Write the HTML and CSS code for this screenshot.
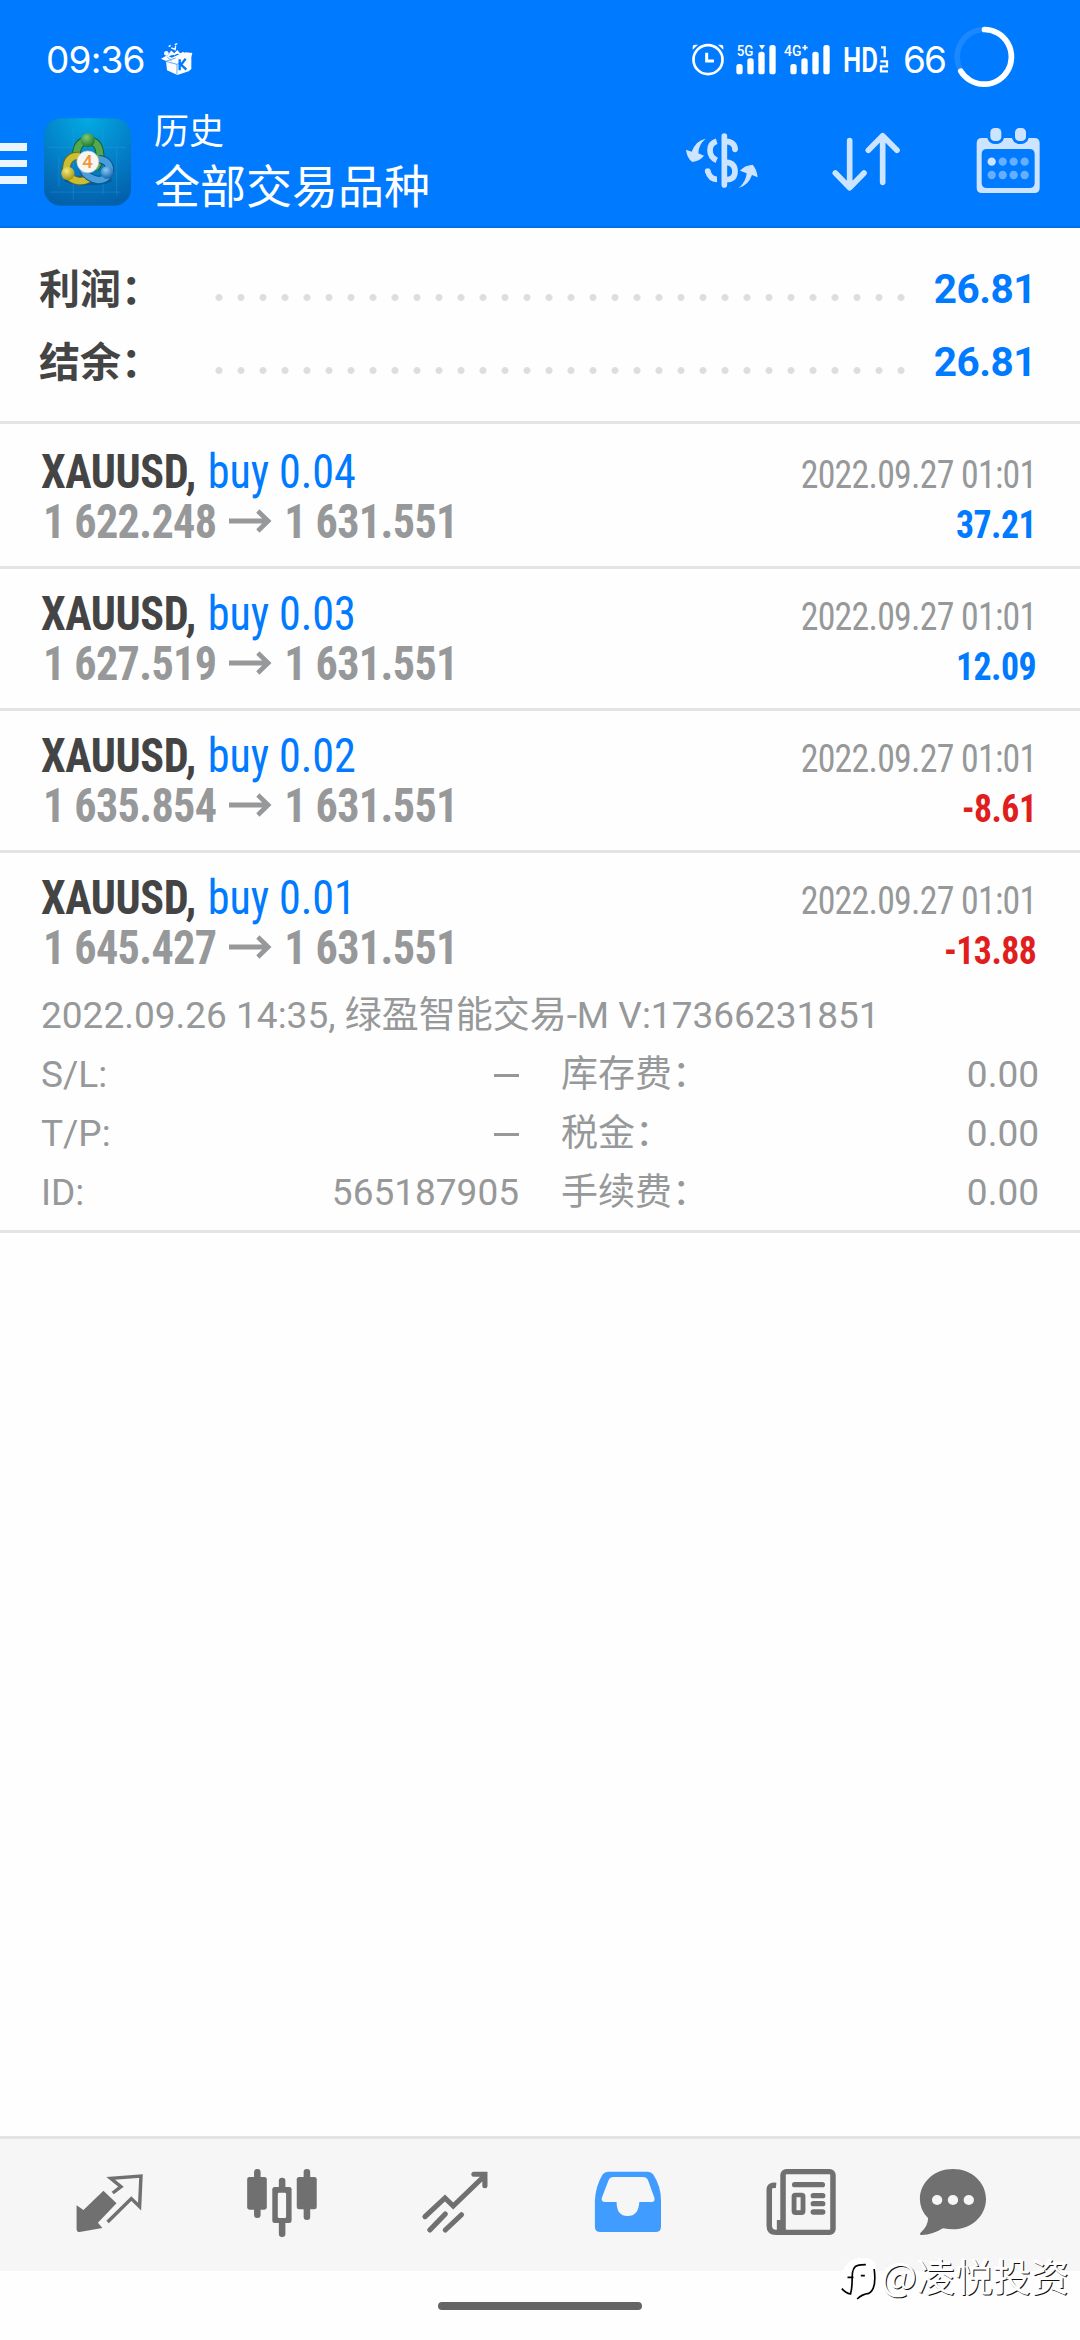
FILE: index.html
```html
<!DOCTYPE html>
<html lang="zh-CN">
<head>
<meta charset="utf-8">
<title>历史</title>
<link rel="stylesheet" href="styles.css">
</head>
<body>
<div class="screen">
  <header class="header">
    <div class="status">
      <span class="clock">09:36</span>
      <svg class="box-icon" viewBox="390 36 102 102">
        <path fill="#fff" d="M393 86l18-10 14 7 20-9 22-7 20 2-3 12v36l-8 7-34 11-31-14-3-28z"/>
        <path d="M407 94l34 9v30M407 94l30-10M411 80l14 14M441 103l12-5" fill="none" stroke="#3d97ff" stroke-width="2.5"/>
        <path d="M449 88v33M467 86l-14 18 16 15" fill="none" stroke="#007aff" stroke-width="7"/>
        <path d="M409 65a5 5 0 1 0 .1 0M416 50l6-4M424 54l12 4M434 44l8-3M437 47l-2 14" fill="#fff" stroke="#fff" stroke-width="4"/>
        <path d="M414 79l10-14 9 8 9-9 9 11 10-8" fill="#fff" stroke="#fff" stroke-width="5"/>
      </svg>
      <div class="status-right">
        <svg class="alarm" viewBox="90 126 102 102" fill="none" stroke="#fff">
          <circle cx="141" cy="179" r="43.500" stroke-width="8"/>
          <path d="M137 158v25h22" stroke-width="9"/>
          <path d="M95 149v-9q0-6 7-6h9zM187 149v-9q0-6-7-6h-9z" fill="#fff" stroke="none"/>
        </svg>
        <svg class="signal one" viewBox="222 126 126 102" fill="#fff">
          <text x="227" y="168" textLength="50" lengthAdjust="spacingAndGlyphs">5G</text>
          <rect x="226" y="192" width="19" height="31" rx="8"/><rect x="259" y="175" width="19" height="48" rx="8"/>
          <rect x="292" y="155" width="19" height="68" rx="8"/><rect x="325" y="135" width="19" height="88" rx="8"/>
          <path d="M294 135h18l-9 14z"/>
        </svg>
        <svg class="signal two" viewBox="366 126 144 102" fill="#fff">
          <text x="369" y="168" textLength="52" lengthAdjust="spacingAndGlyphs">4G</text>
          <path d="M432 135v16M424 143h16" stroke="#fff" stroke-width="5"/>
          <rect x="388" y="192" width="19" height="31" rx="8"/><rect x="421" y="175" width="19" height="48" rx="8"/>
          <rect x="454" y="155" width="19" height="68" rx="8"/><rect x="487" y="135" width="19" height="88" rx="8"/>
        </svg>
        <svg class="hd" viewBox="546 126 138 102" fill="#fff">
          <text class="hd-text" x="546" y="216" textLength="105" lengthAdjust="spacingAndGlyphs">HD</text>
          <path d="M660 142h11v30M658 184h20v15h-18v15h21" fill="none" stroke="#fff" stroke-width="7"/>
        </svg>
        <span class="percent">66</span>
        <svg class="ring" viewBox="876 76 190 190" fill="none" stroke-width="17" stroke-linecap="round">
          <circle cx="971" cy="172" r="82.500" stroke="#1b88ff"/>
          <path d="M971 89.500a82.500 82.500 0 1 1-71.500 126" stroke="#fff"/>
        </svg>
      </div>
    </div>
    <div class="toolbar">
      <div class="menu"><i></i><i></i><i></i></div>
      <svg class="logo" viewBox="43 265 262 263">
        <defs>
          <radialGradient id="bg" cx=".5" cy="0" r="1"><stop offset="0" stop-color="#03abe2"/><stop offset=".55" stop-color="#0380c8"/><stop offset="1" stop-color="#0361ac"/></radialGradient>
          <radialGradient id="gr" cx=".4" cy=".3" r=".7"><stop offset="0" stop-color="#82ca78"/><stop offset="1" stop-color="#187a2c"/></radialGradient>
          <radialGradient id="ye" cx=".4" cy=".3" r=".7"><stop offset="0" stop-color="#f4ec80"/><stop offset="1" stop-color="#a49314"/></radialGradient>
          <radialGradient id="bl" cx=".4" cy=".3" r=".7"><stop offset="0" stop-color="#8cc9f2"/><stop offset="1" stop-color="#1668ae"/></radialGradient>
        </defs>
        <rect x="43" y="265" width="262" height="263" rx="50" fill="url(#bg)"/>
        <path d="M131 295v215M221 295v200M55 352h235M60 487h215M262 350v150M88 380v90" stroke="#36a7df" stroke-opacity=".45" stroke-width="2" fill="none"/>
        <ellipse cx="176" cy="452" rx="72" ry="15" fill="#014d83" opacity=".55"/>
        <path d="M140 376q2-42 36-45 34 3 36 45 0 20-16 40" fill="none" stroke="#145f32" stroke-width="26"/>
        <path d="M140 376q2-42 36-45 34 3 36 45 0 20-16 40" fill="none" stroke="#54a84d" stroke-width="20"/>
        <path d="M150 378q-37-2-40 38 5 36 41 38 16 0 30-8" fill="none" stroke="#716d1a" stroke-width="25"/>
        <path d="M150 378q-37-2-40 38 5 36 41 38 16 0 30-8" fill="none" stroke="#cabe33" stroke-width="19"/>
        <path d="M208 387q33 5 34 36-7 28-36 28-32-5-46-31" fill="none" stroke="#10558f" stroke-width="25"/>
        <path d="M208 387q33 5 34 36-7 28-36 28-32-5-46-31" fill="none" stroke="#4a9fda" stroke-width="19"/>
        <circle cx="175" cy="331" r="21" fill="url(#gr)"/><circle cx="115" cy="431" r="20" fill="url(#ye)"/><circle cx="233" cy="428" r="19" fill="url(#bl)"/>
        <circle cx="175" cy="396" r="33" fill="#f7f6f3" stroke="#c5c3b5" stroke-width="2"/>
        <text class="four" x="158" y="416">4</text>
      </svg>
      <div class="titles"><div class="title-small">历史</div><div class="title-big">全部交易品种</div></div>
      <div class="actions">
        <svg viewBox="72 360 240 240" fill="#cce4ff">
          <path d="M193 408v147" stroke="#cce4ff" stroke-width="17" stroke-linecap="round"/>
          <path d="M170 424q-20 6-20 27t20 30M143 513q7 25 28 25M198 424q27 2 27 24M199 487q26 2 26 27t-26 25" fill="none" stroke="#cce4ff" stroke-width="17"/>
          <circle cx="143" cy="513" r="8.500"/><circle cx="225" cy="448" r="8.500"/>
          <path d="M137 416q-22 18-22 44l17 7q-12 16-35 19-16-11-19-37l17 6q13-34 42-39zM236 564q22-18 24-44l-20-8q13-16 38-18 12 13 15 38l-17-7q-11 31-40 39z"/>
        </svg>
        <svg viewBox="495 360 240 240" fill="none" stroke="#cce4ff" stroke-width="17" stroke-linecap="round" stroke-linejoin="round">
          <path d="M566 422v139M523 519l43 44 43-44M665 547V408M622 451l43-44 43 44"/>
        </svg>
        <svg viewBox="925 360 240 240" fill="#cce4ff">
          <path fill-rule="evenodd" d="M967 414h16q5 18 25 18t25-18h24q5 18 25 18t25-18h17q16 0 16 16v133q0 16-16 16H967q-16 0-16-16V430q0-16 16-16zM982 447q-16 0-16 16v85q0 16 16 16h127q16 0 16-16v-85q0-16-16-16z"/>
          <rect x="992" y="384" width="33" height="39" rx="13"/><rect x="1066" y="384" width="33" height="39" rx="13"/>
          <circle cx="996" cy="485" r="12.500"/>
          <g fill="#66afff"><circle cx="1029" cy="485" r="12.500"/><circle cx="1062" cy="485" r="12.500"/><circle cx="1095" cy="485" r="12.500"/><circle cx="996" cy="525" r="12.500"/><circle cx="1029" cy="525" r="12.500"/><circle cx="1062" cy="525" r="12.500"/><circle cx="1095" cy="525" r="12.500"/></g>
        </svg>
      </div>
    </div>
  </header>

  <section class="summary">
    <div class="sum-row"><span class="sum-label">利润：</span><span class="dots"></span><span class="sum-value">26.81</span></div>
    <div class="sum-row"><span class="sum-label">结余：</span><span class="dots"></span><span class="sum-value">26.81</span></div>
  </section>

  <main class="deals">
    <article class="deal">
      <div class="line"><span class="name"><b>XAUUSD,</b> buy 0.04</span><span class="date">2022.09.27 01:01</span></div>
      <div class="line"><span class="price">1 622.248<svg class="arrow" viewBox="0 0 46 24" preserveAspectRatio="none"><path d="M0 12h42M31 2l11 10-11 10"/></svg>1 631.551</span><span class="profit">37.21</span></div>
    </article>
    <article class="deal">
      <div class="line"><span class="name"><b>XAUUSD,</b> buy 0.03</span><span class="date">2022.09.27 01:01</span></div>
      <div class="line"><span class="price">1 627.519<svg class="arrow" viewBox="0 0 46 24" preserveAspectRatio="none"><path d="M0 12h42M31 2l11 10-11 10"/></svg>1 631.551</span><span class="profit">12.09</span></div>
    </article>
    <article class="deal">
      <div class="line"><span class="name"><b>XAUUSD,</b> buy 0.02</span><span class="date">2022.09.27 01:01</span></div>
      <div class="line"><span class="price">1 635.854<svg class="arrow" viewBox="0 0 46 24" preserveAspectRatio="none"><path d="M0 12h42M31 2l11 10-11 10"/></svg>1 631.551</span><span class="profit loss">-8.61</span></div>
    </article>
    <article class="deal open">
      <div class="line"><span class="name"><b>XAUUSD,</b> buy 0.01</span><span class="date">2022.09.27 01:01</span></div>
      <div class="line"><span class="price">1 645.427<svg class="arrow" viewBox="0 0 46 24" preserveAspectRatio="none"><path d="M0 12h42M31 2l11 10-11 10"/></svg>1 631.551</span><span class="profit loss">-13.88</span></div>
      <div class="details">
        <p class="comment">2022.09.26 14:35, 绿盈智能交易-M V:17366231851</p>
        <div class="pair"><span>S/L:</span><i class="dash"></i></div>
        <div class="pair"><span>库存费：</span><span>0.00</span></div>
        <div class="pair"><span>T/P:</span><i class="dash"></i></div>
        <div class="pair"><span>税金：</span><span>0.00</span></div>
        <div class="pair"><span>ID:</span><span>565187905</span></div>
        <div class="pair"><span>手续费：</span><span>0.00</span></div>
      </div>
    </article>
  </main>

  <nav class="tabs">
    <svg viewBox="197 135 232.300 240" preserveAspectRatio="none">
      <path d="M297 212l38 38-54 58 13 16-66 12q-9 0-9-10v-70l20 14z" fill="#707070"/>
      <path d="M324 219l24-19-30-25 88-7-4 92-24-24-69 70" fill="none" stroke="#707070" stroke-width="10"/>
    </svg>
    <svg viewBox="700 135 232.300 240" preserveAspectRatio="none" fill="#707070">
      <rect x="735" y="147" width="19" height="147" rx="9"/><rect x="715" y="171" width="57" height="98" rx="7"/>
      <rect x="879" y="147" width="19" height="153" rx="9"/><rect x="859" y="171" width="58" height="97" rx="7"/>
      <rect x="807" y="173" width="19" height="178" rx="9"/><rect x="788" y="201" width="56" height="108" rx="7"/><rect x="804" y="218" width="24" height="76" rx="4" fill="#f6f6f6"/>
    </svg>
    <svg viewBox="1202 135 232.300 240" preserveAspectRatio="none" fill="none" stroke="#707070" stroke-width="15" stroke-linecap="round">
      <path d="M1231 290l58-56 24 24 91-91M1373 163h32v34" /><path d="M1245 330l45-48M1290 330l47-46"/>
    </svg>
    <svg viewBox="138 135 232.300 240" preserveAspectRatio="none">
      <path fill="#409cff" fill-rule="evenodd" d="M196 155h116q9 0 15 8 23 35 23 80v77q0 16-16 16H174q-16 0-16-16v-77q2-46 23-80 6-8 15-8zM212 171q-10 0-14 9l-20 54q-2 12 9 12h34q0 42 32 42t34-42h36q10 0 8-12l-19-54q-4-9-14-9z"/>
    </svg>
    <svg viewBox="641 135 232.300 240" preserveAspectRatio="none" fill="none" stroke="#707070" stroke-width="16">
      <rect x="705" y="155" width="145" height="182" rx="10"/>
      <path d="M685 196q-20-2-20 13v108q0 20 20 20h30M695 300v45"/>
      <path d="M739 194h80M793 227h27M793 251h27M793 276h27" stroke-linecap="round"/>
      <rect x="737" y="225" width="26" height="53" rx="4" stroke-width="14"/>
    </svg>
    <svg viewBox="1083 135 232.300 240" preserveAspectRatio="none" fill="#707070">
      <path d="M1199 147c54 0 96 40 96 90s-42 91-96 91q-14 0-29-3-29 19-62 20-8-1-3-7 21-18 22-43-24-24-24-58c0-50 42-90 96-90z"/>
      <g fill="#f6f6f6"><circle cx="1153" cy="240" r="15"/><circle cx="1199" cy="240" r="15"/><circle cx="1245" cy="240" r="15"/></g>
    </svg>
  </nav>
  <div class="home"><i></i></div>
  <div class="watermark">
    <svg viewBox="30 35 110 126">
      <path d="M82 36h28q29 3 29 36v20q-2 40-31 46-15 3-24 20v-22q-20 5-30 2-20-10-21-30l8-2q-12-24 4-46 14-21 37-24z" fill="#fff"/>
      <path d="M52 93h18M66 92q0-31 17-35 7-2 24-2M66 96q0 30-5 47-14-2-26-16M92 88h12M132 68q8 60-16 73-20 2-35 17" fill="none" stroke="#000" stroke-width="5"/>
    </svg>
    <span>@凌悦投资</span>
  </div>
</div>
</body>
</html>
```
FILE: styles.css
```css
* { box-sizing: border-box; }
body { margin: 0; background: #fefefe; font-family: Roboto, "Noto Sans CJK SC", sans-serif; }
.screen { position: relative; width: 1080px; height: 2340px; display: flex; flex-direction: column; overflow: hidden; }
svg { display: block; flex: none; overflow: visible; }

.header { height: 228px; background: #007aff; border-bottom: 2px solid #006ee6; color: #fff; }
.status { height: 118px; display: flex; align-items: flex-start; padding: 22px 63px 0 46px; }
.clock, .percent { font-family: Inter, Roboto, sans-serif; font-size: 37px; line-height: 76px; font-weight: 400; }
.clock { width: 114px; letter-spacing: -0.8px; }
.box-icon { width: 34px; height: 34px; margin-top: 20px; }
.status-right { display: flex; margin-left: auto; }
.alarm { width: 34px; height: 34px; margin: 20px 10px 0 0; }
.signal { height: 34px; margin-top: 20px; }
.signal text { font: 500 43px Roboto, sans-serif; }
.one { width: 42px; margin-right: 6px; }
.two { width: 48px; margin-right: 12px; }
.hd { width: 46px; height: 34px; margin: 20px 14px 0 0; }
.hd-text { font: 600 107px Roboto, sans-serif; }
.percent { width: 50px; letter-spacing: -2px; }
.ring { width: 63px; height: 63px; margin-top: 3px; margin-right: 1px; }

.toolbar { display: flex; height: 108px; align-items: flex-start; padding-right: 32px; }
.menu { width: 27px; margin: 25px 17px 0 0; display: flex; flex-direction: column; gap: 9px; }
.menu i { height: 7.500px; background: #ebf5ff; }
.logo { width: 87px; height: 88px; }
.four { font: 500 56px Roboto, sans-serif; fill: #f3943b; }
.titles { margin: -15px 0 0 23px; white-space: nowrap; font-family: "Noto Sans CJK SC", sans-serif; }
.title-small { font-size: 35px; line-height: 52px; }
.title-big { font-size: 46px; line-height: 56px; }
.actions { display: flex; gap: 62px; margin: 2px 0 0 auto; }
.actions svg { width: 80px; height: 80px; }

.summary { height: 196px; padding: 25px 44px 0 39px; border-bottom: 3px solid #e4e4e4; }
.sum-row { height: 73px; display: flex; align-items: center; line-height: 73px; }
.sum-label { width: 176px; margin-top: -7px; font-family: "Noto Sans CJK SC", sans-serif; font-size: 41px; font-weight: 700; color: #444; }
.dots { width: 693px; height: 7px; margin-top: 15px; background: radial-gradient(circle at 4px 3.500px, #dedede 3px, transparent 4px) 0 0 / 22px 7px; }
.sum-value { margin-left: auto; font-size: 40.500px; font-weight: 700; color: #007aff; letter-spacing: -0.5px; }

.deals { flex: 1; }
.deal { height: 142px; padding: 20px 41px 0; border-bottom: 3px solid #e4e4e4; }
.deal:first-child { height: 145px; padding-top: 23px; }
.deal.open { height: 380px; }
.line { display: flex; justify-content: space-between; align-items: baseline; height: 50px; line-height: 50px; white-space: nowrap; font-family: "Roboto Condensed", Roboto, sans-serif; font-stretch: 75%; padding-right: 3px; }
.name, .price { transform: scaleX(.93); transform-origin: left; }
.date, .profit { transform: scaleX(.93); transform-origin: right; }
.name { font-size: 47.500px; color: #007aff; letter-spacing: -0.1px; }
.name b { color: #444; letter-spacing: -0.5px; margin-right: 2px; }
.price { font-size: 47.500px; font-weight: 700; color: #969899; margin-left: 2px; letter-spacing: -0.7px; }
.arrow { display: inline-block; width: 46px; height: 24px; margin: 0 13px 0 14px; vertical-align: 5px; fill: none; stroke: #969899; stroke-width: 5px; }
.date { font-size: 38.500px; color: #969899; letter-spacing: -0.8px; }
.profit { font-size: 38.500px; font-weight: 700; color: #007aff; letter-spacing: -0.6px; }
.loss { color: #e01e1e; }

.details { display: grid; grid-template-columns: 478px 478px; column-gap: 42px; margin-top: 13px; font-size: 37px; line-height: 59px; color: #969899; }
.comment { grid-column: 1 / 3; margin: 0; white-space: nowrap; }
.pair { display: flex; justify-content: space-between; align-items: center; height: 59px; }
.dash { width: 25px; height: 3px; background: #969899; margin-top: 1px; }

.tabs { height: 135px; background: #f6f6f6; border-top: 3px solid #e4e4e4; display: grid; grid-template-columns: 173px 173px 173px 173px 173px 132px; padding: 26px 0 0 22px; justify-items: center; }
.tabs svg { width: 80px; height: 80px; }
.home { height: 69px; padding-top: 31px; }
.home i { display: block; width: 204px; height: 8px; margin: 0 auto; border-radius: 4px; background: #646464; }

.watermark { position: absolute; left: 840px; top: 2250px; display: flex; align-items: center; color: #fff; font: 38px/50px "Noto Sans CJK SC", sans-serif; white-space: nowrap; text-shadow: 1px 1px 0 #111, -1px -1px 0 #fff; }
.watermark svg { width: 37px; height: 42px; margin: 8px 4px 0 0; }
```
